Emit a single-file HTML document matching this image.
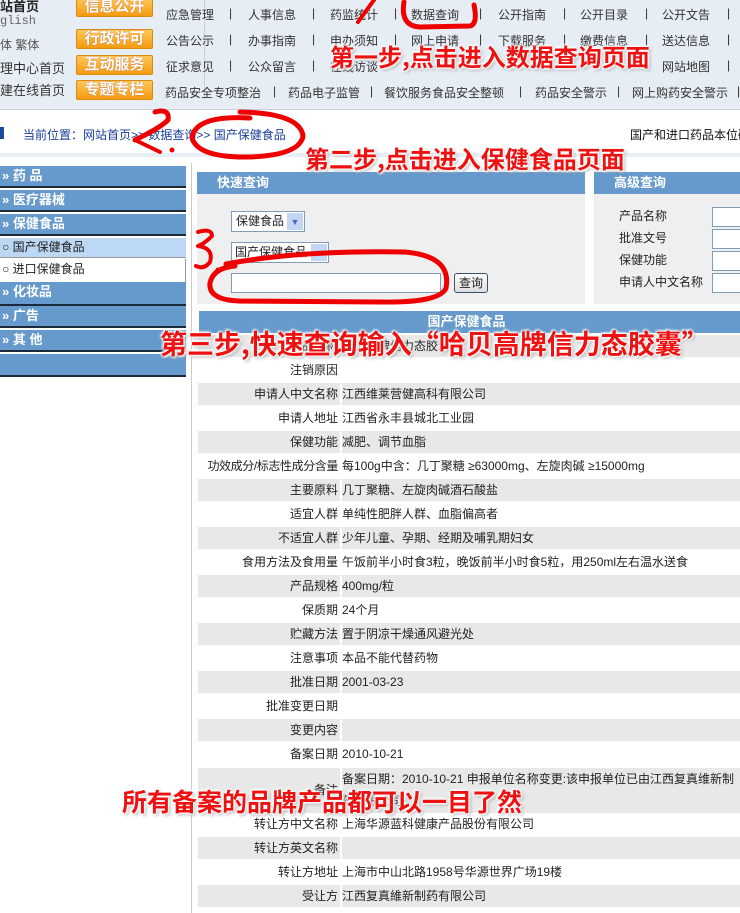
<!DOCTYPE html>
<html><head><meta charset="utf-8">
<style>
*{margin:0;padding:0;box-sizing:border-box}
body{width:740px;height:913px;overflow:hidden;background:#fff;font-family:"Liberation Sans","Noto Sans CJK SC",sans-serif;font-size:12px;color:#222;position:relative}
.a{position:absolute;white-space:nowrap}
.nav{position:absolute;left:0;top:0;width:740px;height:110px;background:#e6edf5;border-bottom:1px solid #c8d3df}
.btn{position:absolute;left:76px;width:77px;height:20px;background:linear-gradient(#ffc85a,#f49a10);border:1px solid #d98a10;border-radius:2px;color:#fff;font-weight:bold;font-size:15px;text-align:center;line-height:18px;text-shadow:0 0 1px #a55}
.lk{position:absolute;font-size:12px;color:#333}
.sb{position:absolute;left:0;width:186px;height:22px;background:#6699cc;border-bottom:2px solid #1b2a3a;color:#fff;font-weight:bold;font-size:13px;line-height:20px;padding-left:2px}
.ph{position:absolute;height:22px;background:#6699cc;color:#fff;font-weight:bold;font-size:13px;line-height:22px}
.row{position:absolute;left:198px;width:542px;height:22px}
.row .l{position:absolute;left:0;width:142px;height:100%;text-align:right;line-height:22px;padding-right:2px}
.row .v{position:absolute;left:144px;right:0;height:100%;line-height:22px;padding-left:0}
.g .l,.g .v{background:#e8e8e8}
.red{position:absolute;white-space:nowrap;color:#ee1111;font-family:"Noto Sans CJK SC",sans-serif;font-weight:700;text-shadow:0 0 3px #fff,0 0 3px #fff,1px 1px 2px #fff,-1px -1px 2px #fff,2px 2px 3px #999}
.inp{position:absolute;background:#fff;border:1px solid #7f9db9}
</style></head><body>
<div class="nav"></div>
<div class="a" style="left:0;top:-4px;font-weight:bold;font-size:13px">站首页</div>
<div class="a" style="left:0;top:14px;color:#666;font-family:'Liberation Mono',monospace">glish</div>
<div class="a" style="left:0;top:36px;color:#555">体 繁体</div>
<div class="a" style="left:0;top:58px;color:#333;font-size:13px">理中心首页</div>
<div class="a" style="left:0;top:80px;color:#333;font-size:13px">建在线首页</div>
<div class="a" style="left:204px;top:0;width:1px;height:100px;background:#c9d3de"></div>
<div class="btn" style="top:-3px">信息公开</div>
<div class="btn" style="top:29px">行政许可</div>
<div class="btn" style="top:55px">互动服务</div>
<div class="btn" style="top:80px">专题专栏</div>

<div class="lk" style="left:166px;top:6px">应急管理</div><div class="lk" style="left:229px;top:6px">|</div>
<div class="lk" style="left:248px;top:6px">人事信息</div><div class="lk" style="left:312px;top:6px">|</div>
<div class="lk" style="left:330px;top:6px">药监统计</div><div class="lk" style="left:394px;top:6px">|</div>
<div class="lk" style="left:411px;top:6px">数据查询</div><div class="lk" style="left:479px;top:6px">|</div>
<div class="lk" style="left:498px;top:6px">公开指南</div><div class="lk" style="left:563px;top:6px">|</div>
<div class="lk" style="left:580px;top:6px">公开目录</div><div class="lk" style="left:645px;top:6px">|</div>
<div class="lk" style="left:662px;top:6px">公开文告</div><div class="lk" style="left:727px;top:6px">|</div>

<div class="lk" style="left:166px;top:32px">公告公示</div><div class="lk" style="left:229px;top:32px">|</div>
<div class="lk" style="left:248px;top:32px">办事指南</div><div class="lk" style="left:312px;top:32px">|</div>
<div class="lk" style="left:330px;top:32px">申办须知</div><div class="lk" style="left:394px;top:32px">|</div>
<div class="lk" style="left:411px;top:32px">网上申请</div><div class="lk" style="left:479px;top:32px">|</div>
<div class="lk" style="left:498px;top:32px">下载服务</div><div class="lk" style="left:563px;top:32px">|</div>
<div class="lk" style="left:580px;top:32px">缴费信息</div><div class="lk" style="left:645px;top:32px">|</div>
<div class="lk" style="left:662px;top:32px">送达信息</div><div class="lk" style="left:727px;top:32px">|</div>

<div class="lk" style="left:166px;top:58px">征求意见</div><div class="lk" style="left:229px;top:58px">|</div>
<div class="lk" style="left:248px;top:58px">公众留言</div><div class="lk" style="left:312px;top:58px">|</div>
<div class="lk" style="left:330px;top:58px">在线访谈</div>
<div class="lk" style="left:662px;top:58px">网站地图</div><div class="lk" style="left:727px;top:58px">|</div>

<div class="lk" style="left:165px;top:84px">药品安全专项整治</div><div class="lk" style="left:273px;top:84px">|</div>
<div class="lk" style="left:288px;top:84px">药品电子监管</div><div class="lk" style="left:370px;top:84px">|</div>
<div class="lk" style="left:384px;top:84px">餐饮服务食品安全整顿</div><div class="lk" style="left:519px;top:84px">|</div>
<div class="lk" style="left:535px;top:84px">药品安全警示</div><div class="lk" style="left:617px;top:84px">|</div>
<div class="lk" style="left:632px;top:84px">网上购药安全警示</div><div class="lk" style="left:737px;top:84px">|</div>

<div class="a" style="left:0;top:127px;width:4px;height:12px;background:#1a4a9a"></div>
<div class="a" style="left:23px;top:126px;color:#1a3d9a">当前位置：网站首页&gt;&gt; 数据查询&gt;&gt; 国产保健食品</div>
<div class="a" style="left:630px;top:126px;color:#111">国产和进口药品本位码</div>
<div class="a" style="left:0;top:153px;width:740px;height:4px;background:#e8eef5"></div>

<div class="a" style="left:191px;top:163px;width:1px;height:750px;background:#ccc"></div>

<div class="sb" style="top:166px">» 药 品</div>
<div class="sb" style="top:190px">» 医疗器械</div>
<div class="sb" style="top:214px">» 保健食品</div>
<div class="a" style="left:0;top:238px;width:186px;height:20px;background:#bcd8f5;border-bottom:1px solid #999;line-height:19px;padding-left:2px;font-size:12px">○ 国产保健食品</div>
<div class="a" style="left:0;top:259px;width:186px;height:23px;background:#fff;border-right:1px solid #999;line-height:21px;padding-left:2px">○ 进口保健食品</div>
<div class="sb" style="top:282px;height:24px">» 化妆品</div>
<div class="sb" style="top:306px">» 广告</div>
<div class="sb" style="top:330px">» 其 他</div>
<div class="sb" style="top:354px;height:23px"></div>

<div class="ph" style="left:197px;top:172px;width:388px;padding-left:20px">快速查询</div>
<div class="a" style="left:197px;top:194px;width:388px;height:110px;background:#efefef"></div>
<div class="inp" style="left:231px;top:211px;width:74px;height:21px;line-height:19px;padding-left:4px;font-size:12px">保健食品<span style="position:absolute;right:1px;top:1px;width:16px;height:17px;background:#c4d6f5;color:#4a6ab0;font-size:9px;text-align:center">▼</span></div>
<div class="inp" style="left:231px;top:242px;width:98px;height:21px;line-height:19px;padding-left:3px;font-size:12px">国产保健食品<span style="position:absolute;right:1px;top:1px;width:16px;height:17px;background:#c4d6f5;color:#4a6ab0;font-size:9px;text-align:center">▼</span></div>
<div class="inp" style="left:231px;top:273px;width:210px;height:20px"></div>
<div class="a" style="left:454px;top:273px;width:34px;height:20px;border:1px solid #3a5070;border-radius:3px;background:linear-gradient(#fff,#ddd);text-align:center;line-height:18px">查询</div>

<div class="ph" style="left:594px;top:172px;width:146px;padding-left:20px">高级查询</div>
<div class="a" style="left:594px;top:194px;width:146px;height:110px;background:#efefef"></div>
<div class="a" style="left:619px;top:207px">产品名称</div>
<div class="a" style="left:619px;top:229px">批准文号</div>
<div class="a" style="left:619px;top:251px">保健功能</div>
<div class="a" style="left:619px;top:273px">申请人中文名称</div>
<div class="inp" style="left:712px;top:207px;width:30px;height:20px"></div>
<div class="inp" style="left:712px;top:229px;width:30px;height:20px"></div>
<div class="inp" style="left:712px;top:251px;width:30px;height:20px"></div>
<div class="inp" style="left:712px;top:273px;width:30px;height:20px"></div>

<div class="ph" style="left:199px;top:311px;width:541px;text-align:center;padding-right:6px">国产保健食品</div>
<div class="row g" style="top:335px"><div class="l">产品名称</div><div class="v">哈贝高牌信力态胶囊</div></div>

<div class="row" style="top:359px"><div class="l">注销原因</div><div class="v"></div></div>
<div class="row g" style="top:383px"><div class="l">申请人中文名称</div><div class="v">江西维莱营健高科有限公司</div></div>
<div class="row" style="top:407px"><div class="l">申请人地址</div><div class="v">江西省永丰县城北工业园</div></div>
<div class="row g" style="top:431px"><div class="l">保健功能</div><div class="v">减肥、调节血脂</div></div>
<div class="row" style="top:455px"><div class="l" style="letter-spacing:-0.4px">功效成分/标志性成分含量</div><div class="v">每100g中含：几丁聚糖 ≥63000mg、左旋肉碱 ≥15000mg</div></div>
<div class="row g" style="top:479px"><div class="l">主要原料</div><div class="v">几丁聚糖、左旋肉碱酒石酸盐</div></div>
<div class="row" style="top:503px"><div class="l">适宜人群</div><div class="v">单纯性肥胖人群、血脂偏高者</div></div>
<div class="row g" style="top:527px"><div class="l">不适宜人群</div><div class="v">少年儿童、孕期、经期及哺乳期妇女</div></div>
<div class="row" style="top:551px"><div class="l">食用方法及食用量</div><div class="v">午饭前半小时食3粒，晚饭前半小时食5粒，用250ml左右温水送食</div></div>
<div class="row g" style="top:575px"><div class="l">产品规格</div><div class="v">400mg/粒</div></div>
<div class="row" style="top:599px"><div class="l">保质期</div><div class="v">24个月</div></div>
<div class="row g" style="top:623px"><div class="l">贮藏方法</div><div class="v">置于阴凉干燥通风避光处</div></div>
<div class="row" style="top:647px"><div class="l">注意事项</div><div class="v">本品不能代替药物</div></div>
<div class="row g" style="top:671px"><div class="l">批准日期</div><div class="v">2001-03-23</div></div>
<div class="row" style="top:695px"><div class="l">批准变更日期</div><div class="v"></div></div>
<div class="row g" style="top:719px"><div class="l">变更内容</div><div class="v"></div></div>
<div class="row" style="top:743px"><div class="l">备案日期</div><div class="v">2010-10-21</div></div>
<div class="row g" style="top:768px;height:45px"><div class="l" style="line-height:45px">备注</div><div class="v" style="line-height:22px;padding-top:0">备案日期：2010-10-21 申报单位名称变更:该申报单位已由江西复真维新制药有限公司</div></div>
<div class="row" style="top:813px"><div class="l">转让方中文名称</div><div class="v">上海华源蓝科健康产品股份有限公司</div></div>
<div class="row g" style="top:837px"><div class="l">转让方英文名称</div><div class="v"></div></div>
<div class="row" style="top:861px"><div class="l">转让方地址</div><div class="v">上海市中山北路1958号华源世界广场19楼</div></div>
<div class="row g" style="top:885px"><div class="l">受让方</div><div class="v">江西复真維新制药有限公司</div></div>

<svg class="a" style="left:0;top:0" width="740" height="913" viewBox="0 0 740 913">
<g fill="none" stroke="#e00" stroke-linecap="round" stroke-linejoin="round">
<path d="M404 2 Q400 26 420 27 L470 26 Q478 24 474 5" stroke-width="5"/>
<path d="M374 0 L358 22" stroke-width="4"/>
<path d="M250 118 Q195 115 192 138 Q198 158 250 157 Q300 155 303 136 Q300 113 240 112" stroke-width="5"/>
<path d="M155 112 Q170 108 168 120 Q160 128 135 140" stroke-width="5"/>
<path d="M135 140 L160 152" stroke-width="4"/>
<circle cx="172" cy="150" r="2" fill="#e00"/>
<path d="M226 264 Q300 250 405 252 Q452 256 446 288 Q440 303 380 302 L240 301 Q208 300 210 283 Q213 268 235 266" stroke-width="5"/>
<path d="M198 232 Q212 228 212 236 Q204 244 198 246 Q214 248 210 262 Q204 270 196 266" stroke-width="4"/>
<circle cx="218" cy="270" r="2" fill="#e00"/>
</g>
</svg>

<div class="red" style="left:330px;top:40px;font-size:24px;line-height:32px">第一步,点击进入数据查询页面</div>
<div class="red" style="left:305px;top:142px;font-size:24px;line-height:32px">第二步,点击进入保健食品页面</div>
<div class="red" style="left:160px;top:325px;font-size:27px;line-height:36px">第三步,快速查询输入“哈贝高牌信力态胶囊”</div>
<div class="red" style="left:122px;top:784px;font-size:25px;line-height:34px">所有备案的品牌产品都可以一目了然</div>
</body></html>
